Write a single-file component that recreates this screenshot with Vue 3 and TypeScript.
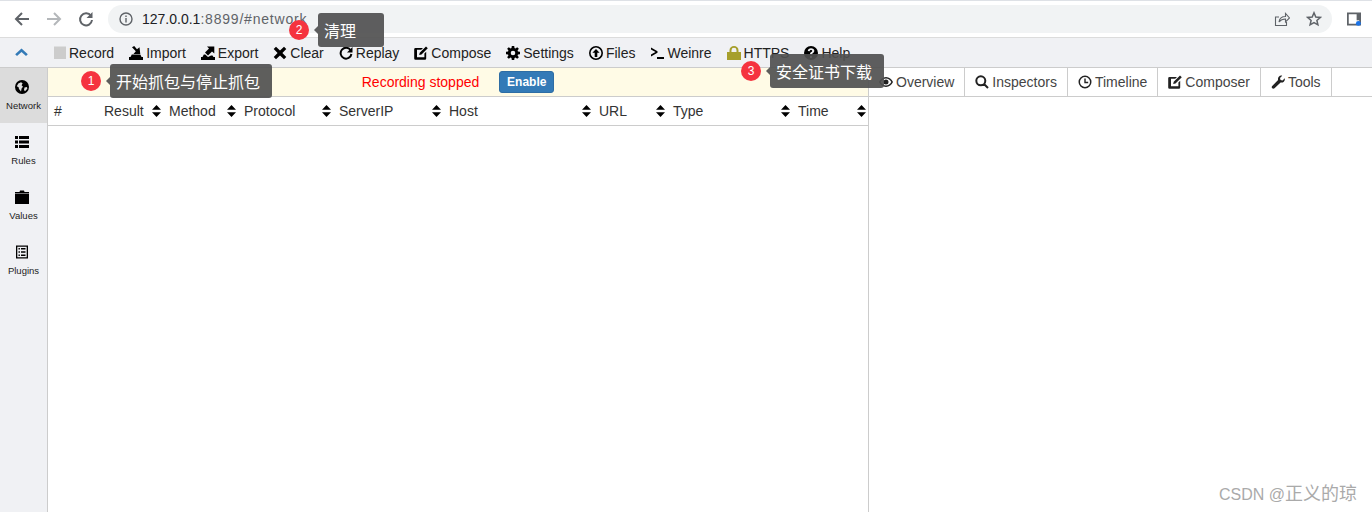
<script setup lang="ts">
interface Ico { d?: string; s?: string; c?: string }

function gearPath(): string {
  const pts: string[] = [];
  const teeth = 8;
  for (let i = 0; i < teeth; i++) {
    const a = (i / teeth) * Math.PI * 2;
    const w = Math.PI / teeth;
    const seq: [number, number][] = [
      [5.2, a - w * 0.75], [7.2, a - w * 0.42], [7.2, a + w * 0.42], [5.2, a + w * 0.75],
    ];
    for (const [r, t] of seq) {
      pts.push(`${(7 + r * Math.sin(t)).toFixed(2)} ${(7 - r * Math.cos(t)).toFixed(2)}`);
    }
  }
  return `M${pts.join('L')}zM7 4.700a2.300 2.300 0 1 0 0 4.600 2.300 2.300 0 1 0 0-4.600z`;
}

const icons: Record<string, Ico> = {
  stop: { d: 'M2 .5h12V13H2z', c: '#cccccc' },
  imp: { d: 'M0 11h14v3H0zM2.800 8.500h1.700l6 .3h1l1 2.200H1.500zM3 1.200 5.200 0 8 3.200 10.500 1.200 11.300 8.300 4.500 8 6.800 5.200z' },
  exp: { d: 'M0 11h14v3H0zM2.800 8.500h1.500l2.700 2.500 3-1.500h1.500l1 1.500H1.500zM4 6.500 8 2.600 6 .4h7.300v7.200L11 5.500 7 9.500z' },
  clear: { d: 'M3 0.800 7 4.600 11 0.800 13.300 3.100 9.400 7 13.300 10.900 11 13.200 7 9.400 3 13.200 0.700 10.900 4.600 7 0.700 3.100z' },
  replay: { s: 'M11.600 4.300A5.400 5.400 0 1 0 12.400 8', d: 'M13.500 1v5.500H8z' },
  compose: { d: 'M1.500 2H9L7.200 3.800H3v7.400h7.400V7.500L12.200 5.700v6.800a1.300 1.300 0 0 1-1.300 1.300H1.500a1.300 1.300 0 0 1-1.300-1.300V3.300A1.300 1.300 0 0 1 1.500 2zM12 0.500 13.800 2.300 7.500 8.500 5.200 9 5.700 6.700z' },
  gear: { d: gearPath() },
  files: { d: 'M7 0a7 7 0 1 0 0 14A7 7 0 1 0 7 0zm0 1.600a5.400 5.400 0 1 1 0 10.800A5.400 5.400 0 1 1 7 1.600zM7 3l3.600 3.800H8.300V11H5.700V6.800H3.400z' },
  weinre: { d: 'M1 1.500 7.500 5.200v1.600L1 10.500V8.600L5.500 6 1 3.400zM7 11h7v2H7z' },
  lock: { d: 'M0 6h2.500V4.200a4.500 4.200 0 0 1 9 0V6H14v8H0zM4.500 6h5V4.200a2.500 2.400 0 0 0-5 0z', c: '#a69f2c' },
  help: { d: 'M7 0a7 7 0 1 0 0 14A7 7 0 1 0 7 0zM6 10h2v2H6zM7 2.200c2 0 3.300 1 3.300 2.600 0 1.300-.8 1.900-1.500 2.400-.6.400-.8.700-.8 1.300H6c0-1.200.4-1.800 1.200-2.400.6-.4 1-.7 1-1.200S7.800 4 7 4 5.800 4.500 5.700 5.200L3.800 4.900C4 3.300 5.200 2.200 7 2.200z' },
  eye: { d: 'M7 2C3.800 2 1.300 4.300 0 7c1.300 2.700 3.800 5 7 5s5.700-2.300 7-5c-1.300-2.700-3.800-5-7-5zM7 3.500c2.200 0 4.200 1.500 5.300 3.500-1.100 2-3.100 3.500-5.300 3.500S2.800 9 1.700 7C2.800 5 4.800 3.500 7 3.500zM7 4.500a2.500 2.500 0 1 0 0 5 2.500 2.500 0 1 0 0-5z' },
  search: { s: 'M5.800 1.300a4.500 4.500 0 1 0 0 9 4.500 4.500 0 1 0 0-9zM9 9l4 4' },
  clock: { d: 'M7 0.500a6.500 6.500 0 1 0 0 13 6.500 6.500 0 1 0 0-13zm0 1.500a5 5 0 1 1 0 10A5 5 0 1 1 7 2zM6.300 3.500h1.400v3.300h2.500v1.400H6.300z' },
  wrench: { d: 'M13.800 3.200c.3 1.400-.1 2.700-1 3.500-.9.800-2.100 1-3.200.7L3.500 13.300c-.6.600-1.600.7-2.300 0s-.6-1.700 0-2.300l5.900-6.100C6.800 3.800 7 2.600 7.800 1.700 8.600.8 9.900.4 11.200.700L9 3l.500 2 2 .500z' },
  globe: { d: 'M7 0a7 7 0 1 0 0 14A7 7 0 1 0 7 0zM3.300 3.500 6 2.300l1.600 1-1 2L8 6.800 6.600 8.500l-.6 3-2-2.500L3.600 7.200 1.800 6.200zM9.500 7.500l2.500-.5.300 1.800-2.300 2.500-1-1.300z' },
  list: { d: 'M0 1h3v3H0zM4 1h10v3H4zM0 5.500h3v3H0zM4 5.500h10v3H4zM0 10h3v3H0zM4 10h10v3H4z' },
  folder: { d: 'M0 2h4.500l.5-1.500h4l.5 1.500H14v1H0zM0 3.600h14V14H0z' },
  plugin: { d: 'M1 0.500h12v13H1zM2.300 1.800v10.400h9.400V1.800zM3.500 3h1.400v1.400H3.500zM6 3h4.500v1.400H6zM3.500 6.300h1.400v1.400H3.500zM6 6.300h4.500v1.400H6zM3.500 9.500h1.400v1.400H3.500zM6 9.500h4.500v1.400H6z' },
};

const tools = [
  { id: 'stop', label: 'Record' }, { id: 'imp', label: 'Import' }, { id: 'exp', label: 'Export' },
  { id: 'clear', label: 'Clear' }, { id: 'replay', label: 'Replay' }, { id: 'compose', label: 'Compose' },
  { id: 'gear', label: 'Settings' }, { id: 'files', label: 'Files' }, { id: 'weinre', label: 'Weinre' },
  { id: 'lock', label: 'HTTPS' }, { id: 'help', label: 'Help' },
];
const sideItems = [
  { id: 'globe', label: 'Network', active: true }, { id: 'list', label: 'Rules', active: false },
  { id: 'folder', label: 'Values', active: false }, { id: 'plugin', label: 'Plugins', active: false },
];
const columns = [
  { label: '#', sort: false }, { label: 'Result', sort: true }, { label: 'Method', sort: true },
  { label: 'Protocol', sort: true }, { label: 'ServerIP', sort: true }, { label: 'Host', sort: true },
  { label: 'URL', sort: true }, { label: 'Type', sort: true }, { label: 'Time', sort: true },
];
const tabs = [
  { id: 'eye', label: 'Overview' }, { id: 'search', label: 'Inspectors' }, { id: 'clock', label: 'Timeline' },
  { id: 'compose', label: 'Composer' }, { id: 'wrench', label: 'Tools' },
];
const tips = [
  { n: 1, text: '开始抓包与停止抓包', cls: 'tip-a' },
  { n: 2, text: '清理', cls: 'tip-b' },
  { n: 3, text: '安全证书下载', cls: 'tip-c' },
];
</script>

<template>
  <div class="page">
    <header class="browser">
      <svg class="nav" viewBox="0 0 18 18"><path d="M16 9H3M9 3 3 9l6 6" fill="none" stroke="#5f6368" stroke-width="2" /></svg>
      <svg class="nav" viewBox="0 0 18 18"><path d="M2 9h13M9 3l6 6-6 6" fill="none" stroke="#b4b7ba" stroke-width="2" /></svg>
      <svg class="nav" viewBox="0 0 18 18"><path d="M14 6a6 6 0 1 0 1 4" fill="none" stroke="#5f6368" stroke-width="2" /><path d="M15.500 2v6h-6z" fill="#5f6368" /></svg>
      <div class="omnibox">
        <svg class="info" viewBox="0 0 14 14"><circle cx="7" cy="7" r="6" fill="none" stroke="#5f6368" stroke-width="1.400" /><path d="M6.300 6h1.400v4.500H6.300zM6.300 3.500h1.400v1.400H6.300z" fill="#5f6368" /></svg>
        <span class="url"><b class="host">127.0.0.1</b>:8899/#network</span>
        <svg class="share" viewBox="0 0 16 16"><path d="M5 6H1.500v8.500h11V11M5 11c.5-3.500 3-5.500 6.500-5.500V2.500l4 4.500-4 4V8C8.500 8 6.500 9 5 11z" fill="none" stroke="#5f6368" stroke-width="1.100" /></svg>
        <svg class="star" viewBox="0 0 16 16"><path d="M8 1.800 9.800 6l4.500.4-3.400 3 1 4.400L8 11.500l-3.900 2.300 1-4.400-3.400-3L6.200 6z" fill="none" stroke="#5f6368" stroke-width="1.500" /></svg>
      </div>
      <svg class="panel" viewBox="0 0 16 16"><path d="M1 1.500h14v13H1z" fill="none" stroke="#5f6368" stroke-width="2" /><path d="M11 1.500h4v8h-4z" fill="#5f6368" /><circle cx="13" cy="13" r="2.800" fill="#1a73e8" /></svg>
    </header>

    <nav class="toolbar">
      <svg class="chevron" viewBox="0 0 14 10"><path d="M7 .5 14 7l-2 2-5-4.500L2 9 0 7z" fill="#337ab7" /></svg>
      <a v-for="t in tools" :key="t.label" class="tool">
        <svg class="ico" viewBox="0 0 14 14">
          <path v-if="icons[t.id].d" :d="icons[t.id].d" :fill="icons[t.id].c || '#000'" fill-rule="evenodd" />
          <path v-if="icons[t.id].s" :d="icons[t.id].s" fill="none" stroke="#000" stroke-width="2" />
        </svg>
        <span>{{ t.label }}</span>
      </a>
    </nav>

    <div class="main">
      <aside class="side">
        <a v-for="s in sideItems" :key="s.label" class="side-item" :class="{ active: s.active }">
          <svg class="ico side-ico" viewBox="0 0 14 14"><path :d="icons[s.id].d" fill="#000" fill-rule="evenodd" /></svg>
          <span>{{ s.label }}</span>
        </a>
      </aside>

      <section class="left">
        <div class="status">
          <span class="stopped">Recording stopped</span>
          <button class="enable">Enable</button>
        </div>
        <div class="thead">
          <div v-for="c in columns" :key="c.label" class="th">
            <span>{{ c.label }}</span>
            <svg v-if="c.sort" class="sort" viewBox="0 0 9 12"><path d="M4.500 0 9 4.800H0zM0 7.200h9L4.500 12z" fill="#000" /></svg>
          </div>
        </div>
      </section>

      <section class="right">
        <div class="tabs">
          <a v-for="t in tabs" :key="t.label" class="tab">
            <svg class="ico" viewBox="0 0 14 14">
              <path v-if="icons[t.id].d" :d="icons[t.id].d" fill="#222" fill-rule="evenodd" />
              <path v-if="icons[t.id].s" :d="icons[t.id].s" fill="none" stroke="#222" stroke-width="2" />
            </svg>
            <span>{{ t.label }}</span>
          </a>
        </div>
      </section>
    </div>

    <div v-for="t in tips" :key="t.n" class="tip" :class="t.cls">
      <i class="badge">{{ t.n }}</i>
      <div class="bubble">{{ t.text }}</div>
    </div>
    <div class="mark">CSDN @<span class="mark-cn">正义的琼</span></div>
  </div>
</template>

<style>
html, body { margin: 0; background: #fff; }
</style>

<style scoped>
.page {
  position: relative;
  width: 1372px;
  height: 512px;
  overflow: hidden;
  display: flex;
  flex-direction: column;
  font: 14px "Liberation Sans", Arial, sans-serif;
  color: #333;
  background: #fff;
}
.browser {
  height: 37px;
  box-sizing: border-box;
  flex: none;
  display: flex;
  align-items: center;
  border-top: 1px solid #dee1e6;
  padding: 0 11px 0 13px;
  gap: 14px;
  background: #fff;
}
.nav { width: 18px; height: 18px; flex: none; }
.omnibox {
  flex: 1;
  height: 28px;
  margin: 0 0 0 -1px;
  border-radius: 14px;
  background: #f1f3f4;
  display: flex;
  align-items: center;
  padding: 0 10px 0 11px;
}
.info { width: 14px; height: 14px; margin-right: 9px; flex: none; }
.url { flex: 1; color: #5f6368; font-size: 14px; letter-spacing: .8px; }
.host { font-weight: 400; color: #202124; letter-spacing: 0; }
.share { width: 16px; height: 16px; margin-right: 16px; }
.star { width: 16px; height: 16px; }
.panel { width: 14px; height: 14px; flex: none; margin-left: 1px; }
.toolbar {
  height: 31px;
  box-sizing: border-box;
  flex: none;
  display: flex;
  align-items: center;
  gap: 15px;
  padding: 0 0 0 15px;
  background: #f0f1f4;
  border-top: 1px solid #dcdcdc;
  border-bottom: 1px solid #cccccc;
  color: #222;
}
.chevron { width: 13px; height: 9px; margin-right: 9px; flex: none; }
.tool { display: flex; align-items: center; gap: 3px; white-space: nowrap; }
.ico { width: 14px; height: 14px; flex: none; }
.main { flex: 1; display: flex; min-height: 0; }
.side {
  width: 48px;
  box-sizing: border-box;
  flex: none;
  background: #f0f1f4;
  border-right: 1px solid #cccccc;
  display: flex;
  flex-direction: column;
}
.side-item {
  height: 55px;
  display: flex;
  flex-direction: column;
  align-items: center;
  justify-content: flex-start;
  padding-top: 12px;
  box-sizing: border-box;
  gap: 6px;
  font-size: 9.5px;
  line-height: 12px;
  color: #222;
}
.side-ico { margin-right: 3px; }
.side-item.active { background: #dcdcdc; }
.left {
  width: 821px;
  box-sizing: border-box;
  flex: none;
  border-right: 1px solid #cccccc;
}
.status {
  height: 29px;
  box-sizing: border-box;
  display: flex;
  align-items: center;
  justify-content: center;
  gap: 20px;
  background: #fffbe6;
  border-bottom: 1px solid #cccccc;
}
.stopped { color: #f00; }
.enable {
  width: 55px;
  height: 22px;
  padding: 0;
  border: 1px solid #2e6da4;
  border-radius: 3px;
  background: #337ab7;
  color: #fff;
  font: 700 12px "Liberation Sans", Arial, sans-serif;
}
.thead {
  height: 29px;
  box-sizing: border-box;
  display: grid;
  grid-template-columns: 50px 65px 75px 95px 110px 150px 74px 125px 1fr;
  border-bottom: 1px solid #cccccc;
}
.th {
  display: flex;
  align-items: center;
  justify-content: space-between;
  padding: 0 2px 0 6px;
  color: #333;
}
.sort { width: 9px; height: 12px; flex: none; }
.right { flex: 1; }
.tabs {
  height: 29px;
  box-sizing: border-box;
  display: flex;
  border-bottom: 1px solid #cccccc;
}
.tab {
  display: flex;
  align-items: center;
  gap: 3px;
  padding: 0 10px;
  border-right: 1px solid #cccccc;
  color: #444;
}
.tip { position: absolute; display: flex; align-items: center; }
.tip-a { left: 81px; top: 64px; }
.tip-b { left: 289px; top: 13px; }
.tip-c { left: 741px; top: 54px; }
.badge {
  width: 20px;
  height: 20px;
  margin-right: 9px;
  border-radius: 50%;
  background: #f5333f;
  color: #fff;
  font: 12px/20px "Liberation Sans", Arial, sans-serif;
  text-align: center;
}
.bubble {
  position: relative;
  height: 34px;
  padding: 0 12px 0 6px;
  border-radius: 3px;
  background: rgba(80, 80, 80, .92);
  color: #fff;
  font: 16px/34px "Noto Sans CJK SC", sans-serif;
  white-space: nowrap;
}
.tip-b .bubble { padding-right: 28px; }
.bubble::before {
  content: "";
  position: absolute;
  left: -4px;
  top: 13px;
  border-style: solid;
  border-width: 4px 4px 4px 0;
  border-color: transparent rgba(80, 80, 80, .92) transparent transparent;
}
.mark {
  position: absolute;
  right: 15px;
  top: 483px;
  color: #aaa;
  font: 16px/22px "Liberation Sans", "Noto Sans CJK SC", sans-serif;
}
.mark-cn { font-size: 18px; }
</style>
